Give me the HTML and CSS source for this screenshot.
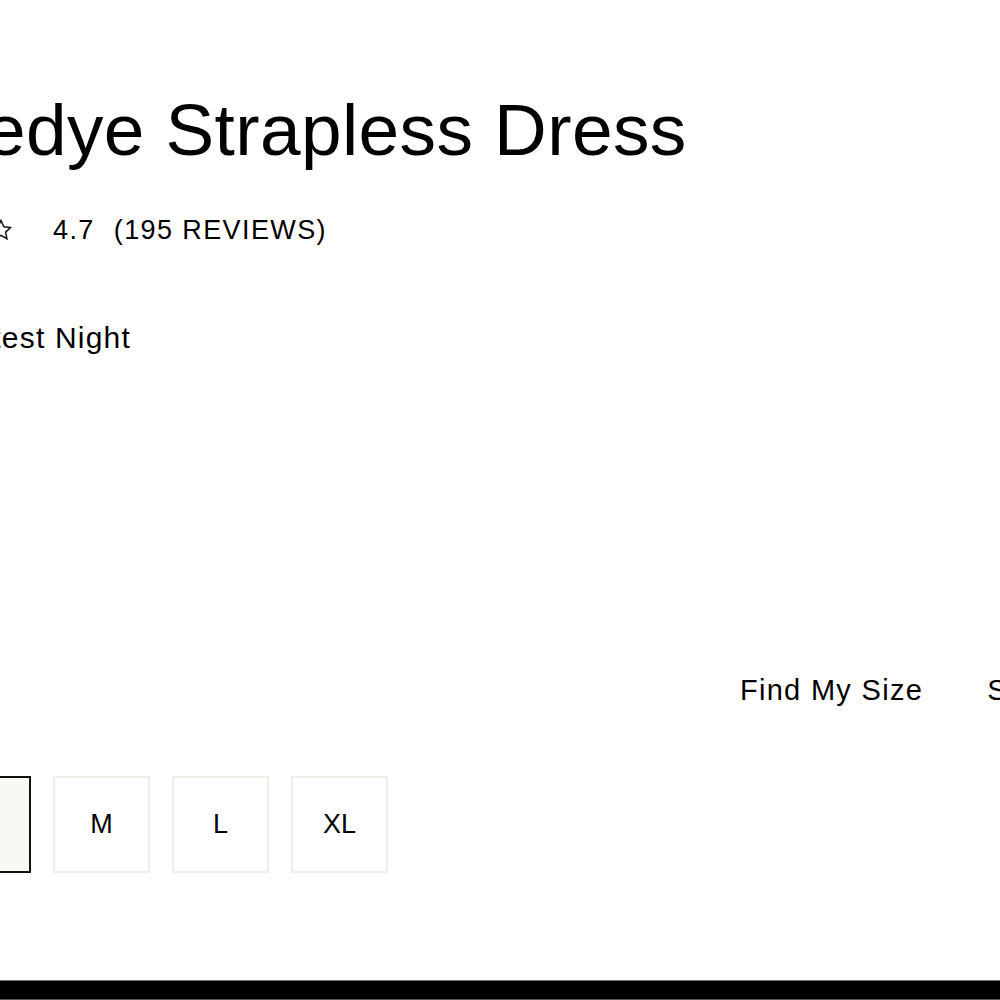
FILE: index.html
```html
<!DOCTYPE html>
<html lang="en">
<head>
<meta charset="utf-8">
<title>Tiedye Strapless Dress</title>
<link rel="stylesheet" href="styles.css">
</head>
<body>
<main class="page">
  <section class="product">
    <h1 class="title">Tiedye Strapless Dress</h1>
    <div class="rating">
      <div class="stars">
        <svg class="star" viewBox="0 0 24 24"><path d="M12 2.5l2.9 6.2 6.6.8-4.9 4.6 1.3 6.6L12 17.4l-5.9 3.3 1.3-6.6-4.9-4.6 6.6-.8z"/></svg>
        <svg class="star" viewBox="0 0 24 24"><path d="M12 2.5l2.9 6.2 6.6.8-4.9 4.6 1.3 6.6L12 17.4l-5.9 3.3 1.3-6.6-4.9-4.6 6.6-.8z"/></svg>
        <svg class="star" viewBox="0 0 24 24"><path d="M12 2.5l2.9 6.2 6.6.8-4.9 4.6 1.3 6.6L12 17.4l-5.9 3.3 1.3-6.6-4.9-4.6 6.6-.8z"/></svg>
        <svg class="star" viewBox="0 0 24 24"><path d="M12 2.5l2.9 6.2 6.6.8-4.9 4.6 1.3 6.6L12 17.4l-5.9 3.3 1.3-6.6-4.9-4.6 6.6-.8z"/></svg>
        <svg class="star" viewBox="0 0 24 24"><path d="M12 2.5l2.9 6.2 6.6.8-4.9 4.6 1.3 6.6L12 17.4l-5.9 3.3 1.3-6.6-4.9-4.6 6.6-.8z"/></svg>
      </div>
      <span class="score">4.7</span>
      <span class="count">(195 REVIEWS)</span>
    </div>
    <p class="color">Hottest Night</p>
    <div class="size-head">
      <a class="size-link" href="#">Find My Size</a>
      <a class="size-link" href="#">Size Guide</a>
    </div>
    <div class="sizes">
      <button class="size selected">S</button>
      <button class="size">M</button>
      <button class="size">L</button>
      <button class="size">XL</button>
    </div>
  </section>
  <footer class="bar"></footer>
</main>
</body>
</html>
```
FILE: styles.css
```css
html, body {
  margin: 0;
  padding: 0;
  background: #ffffff;
}
body {
  font-family: "Liberation Sans", Arial, sans-serif;
  color: #000000;
  overflow: hidden;
}
.page {
  height: 1000px;
  display: flex;
  flex-direction: column;
  overflow: hidden;
}
.product {
  margin-left: -66px;
  width: 1208px;
  display: flex;
  flex-direction: column;
}
.title {
  margin: 93px 0 0 -8px;
  font-size: 73px;
  line-height: 1;
  font-weight: 400;
  letter-spacing: 0.4px;
  white-space: nowrap;
}
.rating {
  display: flex;
  align-items: center;
  margin-top: 48px;
  margin-left: -57px;
  font-size: 27px;
  letter-spacing: 1.4px;
  line-height: 32px;
}
.stars {
  display: flex;
  gap: 4px;
}
.star {
  width: 24px;
  height: 24px;
  fill: none;
  stroke: #111;
  stroke-width: 1.5;
  stroke-linejoin: miter;
}
.score {
  margin-left: 40px;
}
.count {
  margin-left: 19px;
}
.color {
  margin: 76px 0 0 0;
  font-size: 30px;
  line-height: 32px;
  letter-spacing: 1.2px;
  padding-left: 8px;
}
.size-head {
  display: flex;
  justify-content: flex-end;
  gap: 64px;
  margin-top: 320px;
  font-size: 29px;
  line-height: 32px;
  letter-spacing: 1.3px;
}
.size-link {
  color: #000;
  text-decoration: none;
}
.sizes {
  display: flex;
  gap: 22px;
  margin-top: 70px;
  margin-left: 0;
}
.size {
  width: 97px;
  height: 97px;
  box-sizing: border-box;
  border: 2px solid #efefe9;
  background: #ffffff;
  font-family: "Liberation Sans", Arial, sans-serif;
  font-size: 27px;
  color: #000;
  padding: 0;
}
.size.selected {
  border: 2px solid #111;
  background: #f8f8f5;
}
.bar {
  margin-top: auto;
  height: 20px;
  box-sizing: border-box;
  background: #000;
  border-top: 1px solid #777;
  border-bottom: 1px solid #555;
}
```
